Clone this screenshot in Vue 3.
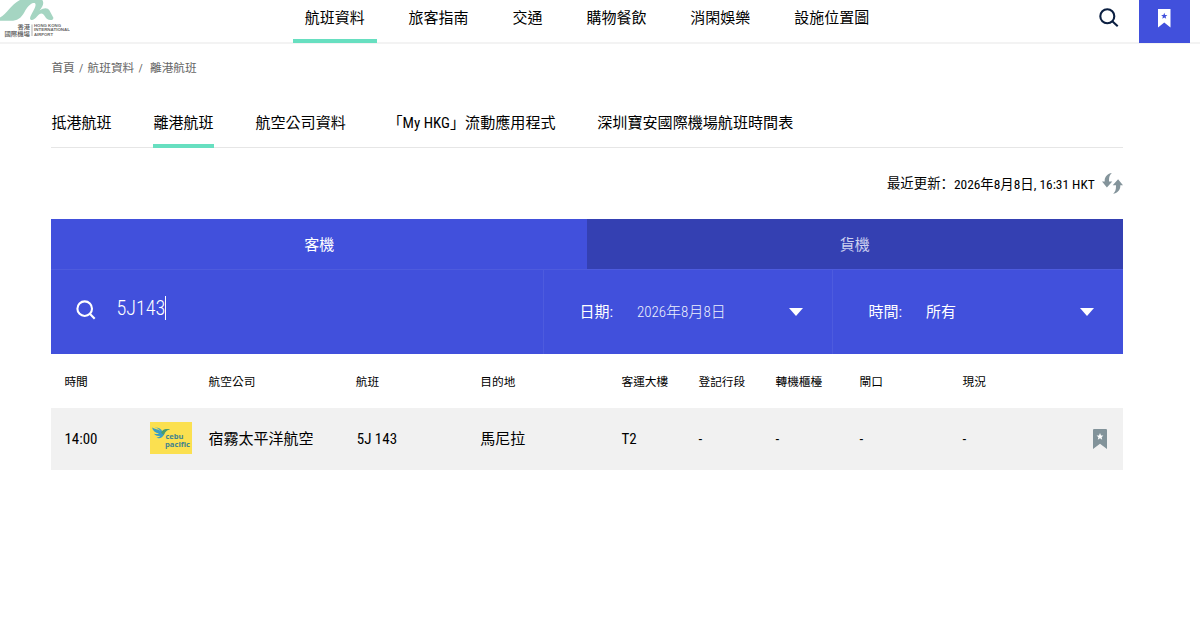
<template>
  <div class="page">
    <!-- Site header -->
    <header class="header">
      <a class="logo">
        <svg viewBox="0 0 70 38" width="70" height="38">
          <path d="M0 17.500C7 14 11 4 21 -0.500H42C44.500 3 43 6.500 39.500 10.500C44 7.500 47.500 7.500 49.500 10.500L53.500 18L52.500 19.700C48.500 20.500 46.500 19 45 16.500C42.500 12 40 13 37 16.500C34.500 19.500 32 21 30.500 19.500C29 18 31.500 14.500 33.500 10.500C36.500 5 36 2.500 33.500 3C30 3.500 27 7.500 24.500 12C21 18.500 17 20.800 11 20.800H0Z" fill="#a5d5c2" />
          <path d="M32 24.500V36" stroke="#777" stroke-width="0.6" />
          <g class="logo-zh">
            <text x="17.500" y="29.200" textLength="12.500" lengthAdjust="spacingAndGlyphs">香港</text>
            <text x="4.500" y="35.800" textLength="25.500" lengthAdjust="spacingAndGlyphs">國際機場</text>
          </g>
          <g class="logo-en">
            <text x="34" y="27" textLength="27" lengthAdjust="spacingAndGlyphs">HONG KONG</text>
            <text x="34" y="31.400" textLength="36" lengthAdjust="spacingAndGlyphs">INTERNATIONAL</text>
            <text x="34" y="35.800" textLength="19" lengthAdjust="spacingAndGlyphs">AIRPORT</text>
          </g>
        </svg>
      </a>
      <nav class="nav">
        <a v-for="(item, i) in navItems" :key="item" class="nav-item" :class="{ active: i === 0 }">{{ item }}</a>
      </nav>
      <button class="header-search">
        <svg viewBox="0 0 20 20" width="20" height="20" fill="none" stroke="#0b1f41" stroke-width="2.1">
          <circle cx="8.300" cy="8.300" r="7" />
          <path d="M13.300 13.300L18.700 18.300" />
        </svg>
      </button>
      <button class="header-saved">
        <svg viewBox="0 0 13 19" width="13" height="19">
          <path d="M0 0H12.500V18.600L6.250 13.400L0 18.600Z" fill="#fff" />
          <path d="M6.250 3.700L7.100 5.900L9.400 6L7.600 7.500L8.200 9.800L6.250 8.500L4.300 9.800L4.900 7.500L3.100 6L5.400 5.900Z" fill="#4150dc" />
        </svg>
      </button>
    </header>

    <main class="content">
      <div class="breadcrumb">
        <span>首頁</span><i>/</i><span>航班資料</span><i>/</i><span class="current">離港航班</span>
      </div>

      <!-- Section tabs -->
      <div class="tabs">
        <a
          v-for="tab in tabs"
          :key="tab"
          class="tab"
          :class="{ active: tab === activeTab }"
          @click="activeTab = tab"
        >{{ tab }}</a>
      </div>

      <div class="updated">
        <span class="updated-label">最近更新：</span>
        <span class="updated-time">2026年8月8日, 16:31 HKT</span>
        <svg viewBox="0 0 21 21" width="21" height="21" fill="#84949b">
          <path d="M9.800 0C6 0.600 2.700 3.500 2.700 7.500V8.500H0L4.900 14.600L10.300 8.500H7V7.500C7 4 7.800 1.800 9.800 0Z" />
          <path d="M11.200 20.800C15 20.200 18.300 17.300 18.300 13.300V12.300H21L16.100 6.200L10.700 12.300H14V13.300C14 16.800 13.200 19 11.200 20.800Z" />
        </svg>
      </div>

      <!-- Search panel -->
      <section class="panel">
        <div class="modes">
          <button class="mode" :class="{ off: mode !== 'passenger' }" @click="mode = 'passenger'">客機</button>
          <button class="mode" :class="{ off: mode !== 'cargo' }" @click="mode = 'cargo'">貨機</button>
        </div>
        <div class="filters">
          <div class="search">
            <svg viewBox="0 0 20 20" width="20" height="20" fill="none" stroke="#fff" stroke-width="2.1">
              <circle cx="8.700" cy="8.700" r="7.300" />
              <path d="M13.600 13.600L18.700 18.800" />
            </svg>
            <span class="query">{{ query }}</span><span class="caret"></span>
          </div>
          <div class="filter">
            <span class="filter-label">日期:</span>
            <span class="filter-value date">2026年8月8日</span>
            <i class="arrow"></i>
          </div>
          <div class="filter">
            <span class="filter-label">時間:</span>
            <span class="filter-value">所有</span>
            <i class="arrow"></i>
          </div>
        </div>
      </section>

      <!-- Flight list -->
      <section class="flights">
        <div class="row head">
          <span>時間</span>
          <span></span>
          <span v-for="col in columns" :key="col">{{ col }}</span>
        </div>
        <div v-for="flight in flights" :key="flight.no" class="row flight">
          <span>{{ flight.time }}</span>
          <span class="airline-logo">
            <svg viewBox="0 0 42 32" width="42" height="32">
              <rect width="42" height="32" fill="#fbe050" />
              <path d="M2 5.500C5 7.200 8 7 10.500 9C8 5.800 6.500 6.200 5 5.500C8.500 5.500 11.500 7 12.300 9.500C14 7 16.500 7 20 7.300C16.500 8.300 15.500 9.500 14.500 12C12.500 16 9 17 6.500 15.500C9 15.200 10 14.500 10.500 13.700C7 14.500 5 13 4 11.700C6.500 12.300 8 12 9 11.500C5 11 3 8.500 2 5.500Z" fill="#3b9dc1" />
              <path d="M11 10.700C13 6.500 16.500 6.500 20 7.300C16.500 8.300 15.500 9.500 13.500 13Z" fill="#4b9c68" />
              <g class="cebu">
                <text x="15.500" y="17" textLength="18" lengthAdjust="spacingAndGlyphs">cebu</text>
                <text x="15" y="24.500" textLength="25" lengthAdjust="spacingAndGlyphs">pacific</text>
              </g>
            </svg>
          </span>
          <span class="zh">{{ flight.airline }}</span>
          <span class="no">{{ flight.no }}</span>
          <span class="zh">{{ flight.destination }}</span>
          <span>{{ flight.terminal }}</span>
          <span>{{ flight.aisle }}</span>
          <span>{{ flight.transfer }}</span>
          <span>{{ flight.gate }}</span>
          <span>{{ flight.status }}</span>
          <svg class="save" viewBox="0 0 14 20" width="14" height="20">
            <path d="M1 0H13Q14 0 14 1V20L7 14.800L0 20V1Q0 0 1 0Z" fill="#82939a" />
            <path d="M7 4L8 6.400L10.400 6.600L8.600 8.200L9.200 10.700L7 9.300L4.800 10.700L5.400 8.200L3.600 6.600L6 6.400Z" fill="#fff" />
          </svg>
        </div>
      </section>
    </main>
  </div>
</template>

<script setup>
import { ref } from 'vue'

const navItems = ['航班資料', '旅客指南', '交通', '購物餐飲', '消閑娛樂', '設施位置圖']
const tabs = ['抵港航班', '離港航班', '航空公司資料', '「My HKG」流動應用程式', '深圳寶安國際機場航班時間表']
const columns = ['航空公司', '航班', '目的地', '客運大樓', '登記行段', '轉機櫃檯', '閘口', '現況']

const activeTab = ref('離港航班')
const mode = ref('passenger')
const query = ref('5J143')

const flights = ref([
  {
    time: '14:00',
    airline: '宿霧太平洋航空',
    no: '5J 143',
    destination: '馬尼拉',
    terminal: 'T2',
    aisle: '-',
    transfer: '-',
    gate: '-',
    status: '-',
  },
])
</script>

<style>
body {
  background: #fff;
}
</style>

<style scoped>
.page {
  height: 625px;
  overflow: hidden;
  font-family: "Roboto Condensed", Roboto, "Noto Sans CJK TC", sans-serif;
  font-stretch: 75%;
  font-size: 15px;
  color: #000;
}
button { font: inherit; border: none; padding: 0; background: none; color: inherit; }
svg { display: block; flex: none; }
i { font-style: normal; }

.header {
  display: flex;
  height: 42px;
  border-bottom: 2px solid #f3f3f3;
}
.logo { width: 292.700px; }
.logo-zh { font: 500 5.600px "Noto Sans CJK TC", sans-serif; fill: #555; }
.logo-en { font: 700 3.800px "Liberation Sans", sans-serif; fill: #666; }
.nav { display: flex; gap: 19.900px; flex: 1; }
.nav-item { padding: 0 12px; height: 39px; line-height: 37px; border-bottom: 4px solid transparent; }
.nav-item.active { border-color: #67dfc0; }
.header-search { width: 59px; display: flex; padding-top: 8px; margin-right: -19px; }
.header-saved {
  width: 51px;
  height: 43px;
  margin-right: 10.400px;
  background: #4150dc;
  display: flex;
  justify-content: center;
  padding-top: 9px;
}

.content { width: 1071.300px; margin-left: 51.400px; }
.breadcrumb { padding-top: 14px; height: 20px; line-height: 20px; font-size: 11.700px; color: #666; }
.breadcrumb i { margin: 0 4.200px; }
.breadcrumb .current { margin-left: 3px; }

.tabs { display: flex; gap: 41.700px; margin-top: 21px; height: 48px; border-bottom: 1px solid #e6e6e6; font-size: 15.080px; }
.tab { height: 45px; line-height: 49px; border-bottom: 4px solid transparent; white-space: nowrap; }
.tab.active { border-color: #67dfc0; }

.updated { display: flex; align-items: center; justify-content: flex-end; height: 71px; font-size: 13.400px; }
.updated span { padding-bottom: 3px; }
.updated .updated-time { margin-right: 7px; padding-bottom: 2px; }
.updated-label { font-family: "Noto Sans CJK SC", sans-serif; }

.panel { background: #4150dc; color: #fff; }
.modes { display: flex; height: 50px; }
.mode { flex: 1; padding-bottom: 2px; }
.mode.off { background: #3440b2; color: #ccd0f0; }
.filters { display: grid; grid-template-columns: 492px 289px 1fr; height: 84px; border-top: 1px solid #4d5bde; }
.search { display: flex; align-items: center; padding: 0 0 5px 25px; font-size: 20.200px; font-weight: 300; }
.query { margin-left: 20px; padding-bottom: 3px; }
.caret { width: 1px; height: 24px; margin-bottom: 3px; background: #fff; }
.filter { display: flex; align-items: center; padding: 0 29px 0 35px; border-left: 1px solid #4d5bde; }
.filter-label { padding-bottom: 3px; }
.filter-value { margin-left: 24px; padding-bottom: 3px; }
.date { font-weight: 300; color: #eef0fd; }
.arrow {
  margin-left: auto;
  margin-bottom: 1px;
  border: 7.500px solid transparent;
  border-top-width: 8px;
  border-top-color: #fff;
  border-bottom: 0;
}

.row {
  display: grid;
  grid-template-columns: 85.500px 58.700px 147.200px 124.500px 141.200px 77px 77px 84px 103px 130.500px 14px;
  align-items: center;
  padding-left: 13px;
}
.head { height: 54px; font-size: 11.700px; }
.head span { padding-bottom: 2px; }
.flight { height: 62px; background: #f1f1f1; }
.airline-logo { padding-bottom: 2px; }
.zh { padding-bottom: 3px; }
.no { padding-left: 1px; }
.cebu { font: 700 7.800px "Open Sans", sans-serif; fill: #42838d; }
</style>
